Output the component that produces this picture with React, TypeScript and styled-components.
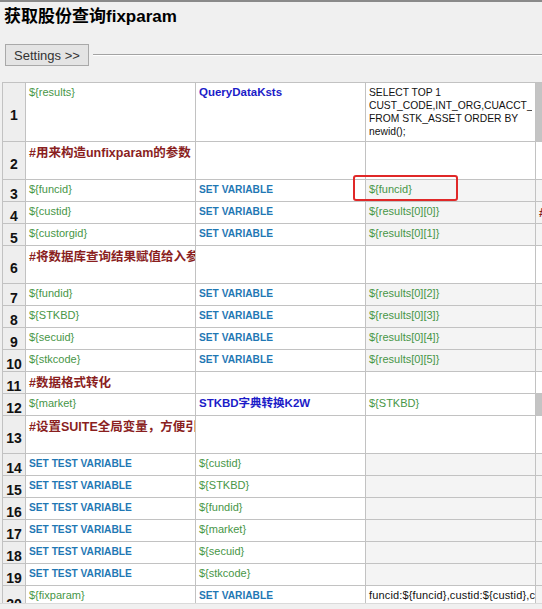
import React from "react";
import styled, { createGlobalStyle } from "styled-components";

type Kind = "var" | "kw" | "builtin" | "comment" | "plain" | "sql" | "empty";
type Tone = "white" | "light" | "dark";

interface Cell {
  kind: Kind;
  text?: string;
  lines?: string[];
  tone?: Tone;
}

interface RowData {
  height: number;
  cells: Cell[];
}

const v = (text: string, tone: Tone = "white"): Cell => ({ kind: "var", text, tone });
const sv = (): Cell => ({ kind: "builtin", text: "SET VARIABLE" });
const stv = (): Cell => ({ kind: "builtin", text: "SET TEST VARIABLE" });
const c = (text: string): Cell => ({ kind: "comment", text });
const e = (tone: Tone = "white"): Cell => ({ kind: "empty", tone });

const rows: RowData[] = [
  {
    height: 59,
    cells: [
      v("${results}"),
      { kind: "kw", text: "QueryDataKsts" },
      {
        kind: "sql",
        lines: [
          "SELECT TOP 1",
          "CUST_CODE,INT_ORG,CUACCT_CODE,FUND_ID",
          "FROM STK_ASSET ORDER BY",
          "newid();",
        ],
      },
      e("dark"),
    ],
  },
  { height: 38, cells: [c("#用来构造unfixparam的参数"), e(), e(), e()] },
  { height: 22, cells: [v("${funcid}"), sv(), v("${funcid}", "light"), e("light")] },
  {
    height: 22,
    cells: [v("${custid}"), sv(), v("${results[0][0]}", "light"), { kind: "comment", text: "#", tone: "light" }],
  },
  { height: 22, cells: [v("${custorgid}"), sv(), v("${results[0][1]}", "light"), e("light")] },
  { height: 38, cells: [c("#将数据库查询结果赋值给入参"), e(), e(), e()] },
  { height: 22, cells: [v("${fundid}"), sv(), v("${results[0][2]}", "light"), e("light")] },
  { height: 22, cells: [v("${STKBD}"), sv(), v("${results[0][3]}", "light"), e("light")] },
  { height: 22, cells: [v("${secuid}"), sv(), v("${results[0][4]}", "light"), e("light")] },
  { height: 22, cells: [v("${stkcode}"), sv(), v("${results[0][5]}", "light"), e("light")] },
  { height: 22, cells: [c("#数据格式转化"), e(), e(), e()] },
  {
    height: 22,
    cells: [v("${market}"), { kind: "kw", text: "STKBD字典转换K2W" }, v("${STKBD}"), e("dark")],
  },
  { height: 38, cells: [c("#设置SUITE全局变量，方便引用"), e(), e(), e()] },
  { height: 22, cells: [stv(), v("${custid}"), e("light"), e("light")] },
  { height: 22, cells: [stv(), v("${STKBD}"), e("light"), e("light")] },
  { height: 22, cells: [stv(), v("${fundid}"), e("light"), e("light")] },
  { height: 22, cells: [stv(), v("${market}"), e("light"), e("light")] },
  { height: 22, cells: [stv(), v("${secuid}"), e("light"), e("light")] },
  { height: 22, cells: [stv(), v("${stkcode}"), e("light"), e("light")] },
  {
    height: 30,
    cells: [
      v("${fixparam}"),
      sv(),
      { kind: "plain", text: "funcid:${funcid},custid:${custid},custorgid:${custorgid}" },
      e("light"),
    ],
  },
];

function App() {
  return (
    <>
      <GlobalStyle />
      <Page>
        <Title>获取股份查询fixparam</Title>
        <SettingsRow>
          <SettingsButton>Settings &gt;&gt;</SettingsButton>
          <Rule />
        </SettingsRow>
        <GridViewport>
          <Grid>
            {rows.map((row, i) => (
              <Row key={i} $height={row.height}>
                <RowHeader>{i + 1}</RowHeader>
                {row.cells.map((cell, j) => (
                  <DataCell key={j} $kind={cell.kind} $tone={cell.tone ?? "white"}>
                    {cell.lines
                      ? cell.lines.map(line => <Line key={line}>{line}</Line>)
                      : cell.text}
                  </DataCell>
                ))}
              </Row>
            ))}
          </Grid>
          <Highlight />
        </GridViewport>
        <BottomBar />
      </Page>
    </>
  );
}

const GlobalStyle = createGlobalStyle`
  html, body {
    margin: 0;
    padding: 0;
    background: #f0f0f0;
    overflow: hidden;
  }
`;

const Page = styled.div`
  height: 100vh;
  display: flex;
  flex-direction: column;
  border-top: 2px solid #8a8a8a;
  box-sizing: border-box;
  background: #f0f0f0;
  font-family: "Liberation Sans", "Noto Sans CJK SC", sans-serif;
`;

const Title = styled.h1`
  margin: 0;
  padding: 4px 4px 0;
  height: 22px;
  line-height: 22px;
  font-size: 17px;
  font-weight: bold;
  color: #000;
  font-family: "Liberation Sans", "Noto Sans CJK SC", sans-serif;
`;

const SettingsRow = styled.div`
  display: flex;
  align-items: center;
  gap: 4px;
  margin: 16px 0 16px 5px;
`;

const SettingsButton = styled.button`
  width: 84px;
  height: 22px;
  padding: 0;
  border: 1px solid #a9a9a9;
  background: #e4e4e4;
  color: #333;
  font-size: 13px;
  font-family: "Liberation Sans", sans-serif;
  cursor: pointer;
`;

const Rule = styled.div`
  flex: 1;
  height: 0;
  border-top: 1px solid #a3a3a3;
  border-bottom: 1px solid #ffffff;
`;

const GridViewport = styled.div`
  position: relative;
  flex: 1;
  overflow: hidden;
  padding-left: 2px;
`;

const Grid = styled.div`
  width: max-content;
  border-top: 1px solid #c2c2c2;
  border-left: 1px solid #c2c2c2;
  background: #fff;
`;

const Row = styled.div<{ $height: number }>`
  display: grid;
  grid-template-columns: 23px 170px 170px 170px 170px;
  grid-template-rows: minmax(0, 1fr);
  height: ${p => p.$height}px;
  box-sizing: border-box;
  border-bottom: 1px solid #c2c2c2;
`;

const RowHeader = styled.div`
  display: flex;
  align-items: center;
  justify-content: center;
  padding-top: 6px;
  box-sizing: border-box;
  overflow: hidden;
  background: #eeeeee;
  border-right: 1px solid #c2c2c2;
  font-family: "Liberation Sans", sans-serif;
  font-weight: bold;
  font-size: 14px;
  line-height: 14px;
  color: #111;
`;

const kindStyles: Record<Kind, string> = {
  var: "color: #479647; font-size: 11px;",
  kw: "color: #1c1cc8; font-size: 11.5px; font-weight: bold;",
  builtin: "color: #1f78b4; font-size: 10.2px; font-weight: bold;",
  comment: "color: #8a1f1f; font-size: 12.5px; font-weight: bold; padding-top: 5px;",
  plain: "color: #111; font-size: 11px; letter-spacing: 0.15px;",
  sql: "color: #111; font-size: 10.3px;",
  empty: "",
};

const toneColors: Record<Tone, string> = {
  white: "#ffffff",
  light: "#f4f4f4",
  dark: "#c4c4c4",
};

const DataCell = styled.div<{ $kind: Kind; $tone: Tone }>`
  padding: 3px 3px 0;
  box-sizing: border-box;
  overflow: hidden;
  white-space: nowrap;
  line-height: 13px;
  border-right: 1px solid #c2c2c2;
  background: ${p => toneColors[p.$tone]};
  ${p => kindStyles[p.$kind]}
`;

const Line = styled.div`
  overflow: hidden;
`;

const Highlight = styled.div`
  position: absolute;
  top: 93px;
  left: 353px;
  width: 105px;
  height: 26px;
  box-sizing: border-box;
  border: 2px solid #e02828;
  border-radius: 3px;
  pointer-events: none;
`;

const BottomBar = styled.div`
  height: 5px;
  background: #f0f0f0;
  border-top: 1px solid #dadada;
`;

export default App;
